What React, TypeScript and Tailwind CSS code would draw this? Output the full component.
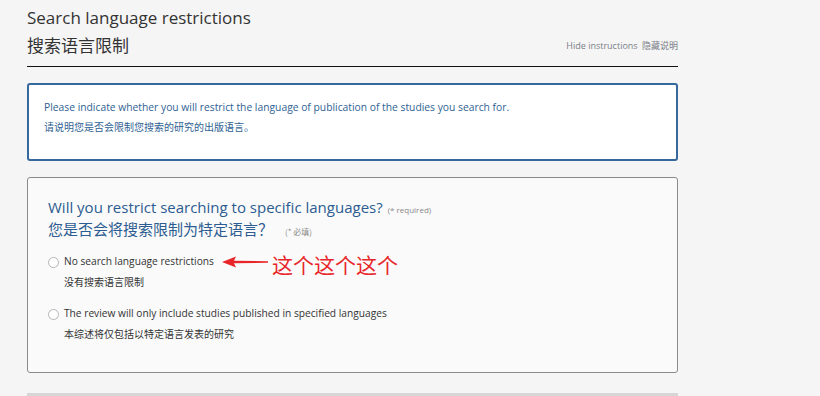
import React from 'react';

const Radio: React.FC = () => (
  <span className="inline-block w-[11px] h-[11px] rounded-full border border-[#b5b5b5] bg-white shrink-0" />
);

const App: React.FC = () => {
  return (
    <div className="min-h-[396px] bg-[#f5f5f5] font-['Open_Sans','Noto_Sans_CJK_SC',sans-serif] overflow-hidden">
      <div className="ml-[27px] w-[651px] pt-[5px]">
        {/* Header */}
        <div className="flex items-end justify-between border-b border-[#111] pb-[7px]">
          <div className="text-[#333] text-[17px]">
            <div className="leading-[26px]">Search language restrictions</div>
            <div className="leading-[28px] font-['Noto_Sans_CJK_SC',sans-serif]">搜索语言限制</div>
          </div>
          <div className="text-[9px] leading-[14px] text-[#7a7f88] pb-[6px]">
            Hide instructions <span className="ml-[2px] font-['Noto_Sans_CJK_SC',sans-serif]">隐藏说明</span>
          </div>
        </div>

        {/* Instructions */}
        <div className="mt-[16px] h-[78px] rounded-[3px] border-2 border-[#35689c] bg-white px-[15px] pt-[12px] text-[10.3px] leading-[20px] text-[#2f5f93]">
          <div>Please indicate whether you will restrict the language of publication of the studies you search for.</div>
          <div className="text-[10px] font-['Noto_Sans_CJK_SC',sans-serif]">请说明您是否会限制您搜索的研究的出版语言。</div>
        </div>

        {/* Question */}
        <div className="mt-[16px] h-[196px] rounded-[3px] border border-[#8a8a8a] bg-[#fafafa] px-[20px] pt-[18px]">
          <div className="flex items-baseline h-[22px] text-[15px] leading-[22px] text-[#2c5c91]">
            <span>Will you restrict searching to specific languages?</span>
            <span className="ml-[5px] text-[8px] leading-[10px] text-[#888]">(* required)</span>
          </div>
          <div className="flex items-baseline h-[22px] text-[15px] leading-[22px] text-[#2c5c91] font-['Noto_Sans_CJK_SC',sans-serif]">
            <span>您是否会将搜索限制为特定语言？</span>
            <span className="ml-[12px] text-[8px] leading-[10px] text-[#888]">(* 必填)</span>
          </div>

          <div className="mt-[12px] text-[10.2px] text-[#333]">
            <div className="relative flex items-center gap-[5px] h-[20px]">
              <Radio />
              <span>No search language restrictions</span>
              <div className="absolute left-[174px] top-[-5px] flex items-center">
                <svg width="46" height="14" viewBox="0 0 46 14">
                  <path d="M0 7 L14 1.5 L12 5.8 L46 6.2 L46 7.8 L12 8.2 L14 12.5 Z" fill="#e8262a" />
                </svg>
                <span className="ml-[4px] mt-[5px] text-[21px] leading-[24px] text-[#e8262a] font-['Noto_Sans_CJK_SC',sans-serif]">
                  这个这个这个
                </span>
              </div>
            </div>
            <div className="pl-[16px] h-[20px] text-[10px] leading-[20px] font-['Noto_Sans_CJK_SC',sans-serif]">没有搜索语言限制</div>
          </div>

          <div className="mt-[12px] text-[10.2px] text-[#333]">
            <div className="flex items-center gap-[5px] h-[20px]">
              <Radio />
              <span>The review will only include studies published in specified languages</span>
            </div>
            <div className="pl-[16px] h-[20px] text-[10px] leading-[20px] font-['Noto_Sans_CJK_SC',sans-serif]">本综述将仅包括以特定语言发表的研究</div>
          </div>
        </div>

        <div className="mt-[20px] h-[4px] bg-[#d6d6d6]" />
      </div>
    </div>
  );
};

export default App;
